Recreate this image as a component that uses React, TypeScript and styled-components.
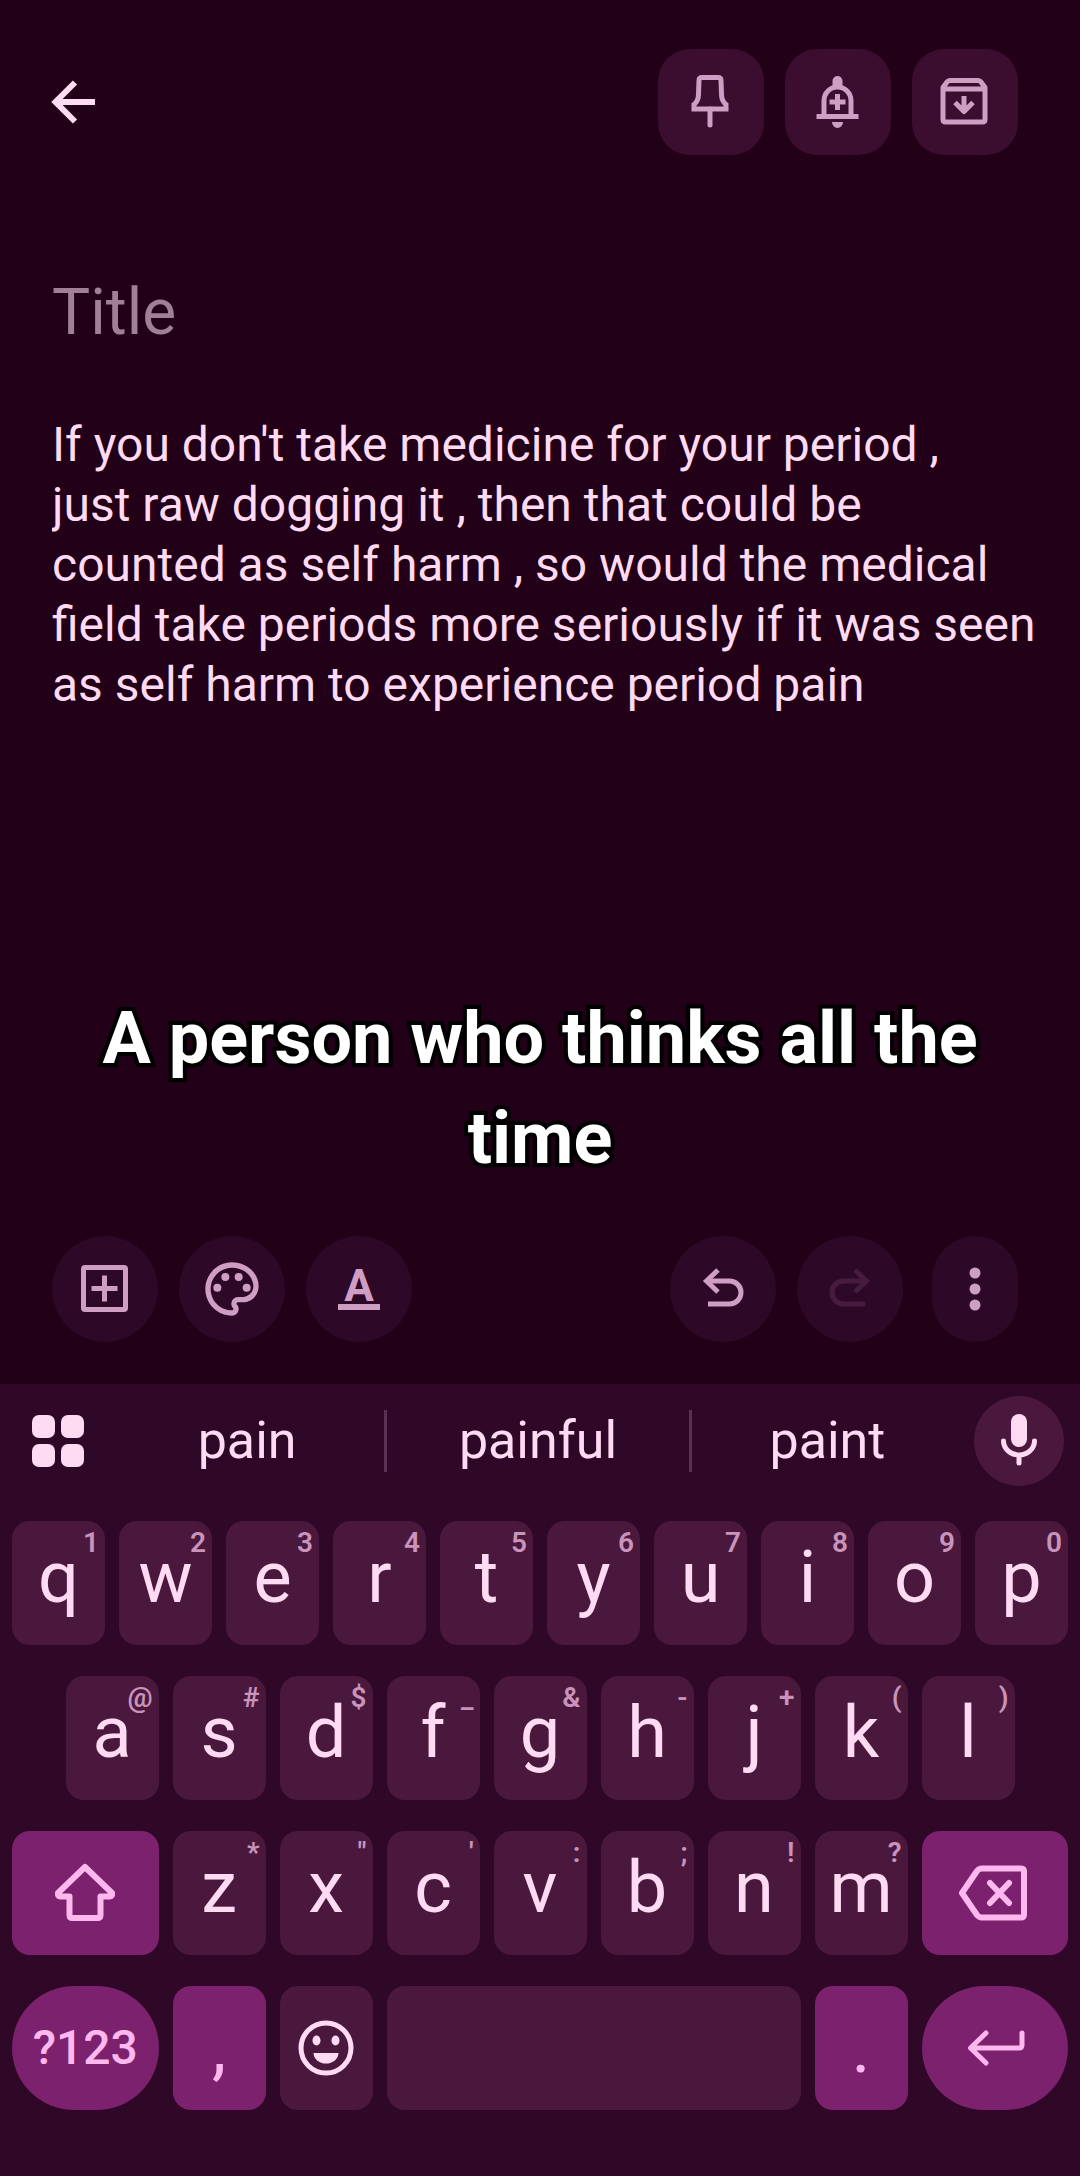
import React from "react";
import styled, { createGlobalStyle } from "styled-components";
import { MdOutlinePalette } from "react-icons/md";

const color = {
  page: "#210018",
  panel: "#2f0828",
  chip: "#3b0d2f",
  round: "#2e0827",
  key: "#4b183d",
  accent: "#7b216d",
  text: "#ffdaf3",
  accentText: "#ffb8ee",
  hint: "#c993bb",
  icon: "#cf9ec4",
  muted: "#a27e98",
  disabled: "#471a3f",
  divider: "#5c3055",
};

const GlobalStyle = createGlobalStyle`
  *, *::before, *::after { box-sizing: border-box; }
  body {
    margin: 0;
    background: ${color.page};
    color: ${color.text};
    font-family: Roboto, "Liberation Sans", sans-serif;
  }
  button, input, textarea { font: inherit; color: inherit; margin: 0; padding: 0; border: 0; background: none; }
`;

const Page = styled.div`
  display: flex;
  flex-direction: column;
  min-height: 100vh;
`;

const Header = styled.header`
  display: flex;
  align-items: center;
  justify-content: space-between;
  padding: 49px 62px 0 44px;
`;

const Group = styled.div`
  display: flex;
  gap: 21px;
`;

const PlainButton = styled.button`
  display: grid;
  place-items: center;
  height: 60px;
`;

const ChipButton = styled.button`
  display: grid;
  place-items: center;
  width: 106px;
  height: 106px;
  border-radius: 32px;
  background: ${color.chip};
  color: ${color.icon};
`;

const Note = styled.main`
  display: flex;
  flex-direction: column;
  padding: 118px 36px 0 52px;
`;

const TitleInput = styled.input`
  width: 100%;
  height: 80px;
  font-size: 64px;
  line-height: 80px;
  outline: none;
  &::placeholder { color: ${color.muted}; opacity: 1; }
`;

const BodyInput = styled.textarea`
  display: block;
  width: 100%;
  margin-top: 62px;
  font-size: 48px;
  line-height: 60px;
  resize: none;
  outline: none;
  overflow: hidden;
`;

const Caption = styled.p`
  margin: auto 0 0;
  padding: 0 60px;
  color: #fff;
  font-size: 72px;
  font-weight: 700;
  line-height: 100px;
  text-align: center;
  -webkit-text-stroke: 8px #000;
  paint-order: stroke fill;
  stroke-linejoin: round;
  text-shadow: 0 0 4px #000;
`;

const Toolbar = styled.div`
  display: flex;
  justify-content: space-between;
  padding: 47px 62px 42px 52px;
`;

const ToolButton = styled.button<{ $narrow?: boolean }>`
  display: grid;
  place-items: center;
  width: ${(p) => (p.$narrow ? 86 : 106)}px;
  height: 106px;
  margin-left: ${(p) => (p.$narrow ? 8 : 0)}px;
  border-radius: 53px;
  background: ${color.round};
  color: ${color.icon};
  &:disabled { color: ${color.disabled}; }
`;

const TextFormatMark = styled.span`
  width: 42px;
  border-bottom: 6px solid currentColor;
  font-size: 44px;
  font-weight: 700;
  line-height: 36px;
  text-align: center;
`;

const Keyboard = styled.section`
  padding-bottom: 66px;
  background: ${color.panel};
`;

const SuggestionBar = styled.div`
  display: grid;
  grid-template-columns: 110px 9fr 10fr 9fr 117px;
  align-items: center;
  height: 114px;
`;

const Suggestion = styled.button`
  height: 62px;
  font-size: 52px;
  line-height: 62px;
  & + & { border-left: 3px solid ${color.divider}; }
`;

const BarButton = styled.button`
  display: grid;
  place-items: center;
  height: 90px;
  padding-left: 6px;
`;

const MicButton = styled.button`
  display: grid;
  place-items: center;
  justify-self: center;
  width: 90px;
  height: 90px;
  margin-right: 4px;
  border-radius: 50%;
  background: ${color.key};
`;

const Keys = styled.div`
  display: grid;
  grid-template-columns: repeat(20, 1fr);
  grid-auto-rows: 124px;
  row-gap: 31px;
  padding: 23px 5px 0;
`;

const Key = styled.button<{ $span?: number; $start?: number; $accent?: boolean; $pill?: boolean; $kind?: "letter" | "symbol" | "word" }>`
  position: relative;
  display: grid;
  place-items: center;
  grid-column: ${(p) => p.$start ?? "auto"} / span ${(p) => p.$span ?? 2};
  margin: 0 7px;
  padding-bottom: ${(p) => (p.$kind === "letter" ? 10 : 0)}px;
  border-radius: ${(p) => (p.$pill ? 62 : 18)}px;
  background: ${(p) => (p.$accent ? color.accent : color.key)};
  color: ${(p) => (p.$accent ? color.accentText : color.text)};
  font-size: ${(p) => (p.$kind === "word" ? 48 : 72)}px;
  font-weight: ${(p) => (p.$kind === "word" ? 500 : 400)};
  line-height: 90px;
`;

const Hint = styled.span`
  position: absolute;
  top: 6px;
  right: 6px;
  color: ${color.hint};
  font-size: 28px;
  font-weight: 600;
  line-height: 32px;
`;

type DrawingProps = { size?: number; width?: number; round?: boolean; children: React.ReactNode };

const Drawing = ({ size = 60, width = 5, round, children }: DrawingProps) => (
  <svg
    width={size}
    height={size}
    viewBox={`0 0 ${size} ${size}`}
    fill="none"
    stroke="currentColor"
    strokeWidth={width}
    strokeLinejoin="round"
    strokeLinecap={round ? "round" : "butt"}
    aria-hidden="true"
  >
    {children}
  </svg>
);

const BackIcon = () => (
  <Drawing width={6}>
    <path d="M31 10.5 11.5 30 31 49.5M12 30H51" strokeLinejoin="miter" />
  </Drawing>
);

const PinIcon = () => (
  <Drawing>
    <path d="M21 5.500H37Q40 5.500 40 8.500L40.500 22Q40.500 29 45 32.500V37H13V32.500Q17.500 29 17.500 22L18 8.500Q18 5.500 21 5.500Z" strokeLinejoin="miter" />
    <path d="M29 37V53" strokeLinecap="round" />
  </Drawing>
);

const ReminderIcon = () => (
  <Drawing>
    <path d="M16 44V28.5a13.500 13.500 0 0 1 27 0V44M8.500 44.500H50.500M29.500 22V38M21.500 30H37.500" />
    <path d="M29.500 4a5 5 0 0 1 5 5v5H24.500V9a5 5 0 0 1 5-5ZM24 50h11a5.500 6 0 0 1-11 0Z" fill="currentColor" stroke="none" />
  </Drawing>
);

const ArchiveIcon = () => (
  <Drawing>
    <path d="M8 15.5V47.500Q8 50 10.500 50H47.500Q50 50 50 47.500V15.500L46 10Q45 8.500 43 8.500H15Q13 8.500 12 10ZM8 17H50M29 24V38M20 30.500 29 39.500 38 30.500" />
  </Drawing>
);

const AddBoxIcon = () => (
  <Drawing>
    <rect x="8.5" y="8.5" width="42" height="42" rx="1.5" />
    <path d="M29.5 16.5V42.5M16.5 29.5H42.5" />
  </Drawing>
);

const UndoIcon = () => (
  <Drawing>
    <path d="M25 11 13.5 22 25 33" strokeLinejoin="miter" />
    <path d="M13 22H36.5a11 11 0 0 1 0 23H15" />
  </Drawing>
);

const RedoIcon = () => (
  <Drawing>
    <path d="M35 11 46.5 22 35 33" strokeLinejoin="miter" />
    <path d="M47 22H23.5a11 11 0 0 0 0 23H45" />
  </Drawing>
);

const MoreIcon = () => (
  <Drawing>
    {[14, 30, 46].map((y) => (
      <circle key={y} cx="30" cy={y} r="5.5" fill="currentColor" stroke="none" />
    ))}
  </Drawing>
);

const AppsIcon = () => (
  <Drawing>
    {[4, 33].map((x) =>
      [4, 33].map((y) => <rect key={`${x}-${y}`} x={x} y={y} width="23" height="23" rx="7" fill="currentColor" stroke="none" />)
    )}
  </Drawing>
);

const MicIcon = () => (
  <Drawing round>
    <rect x="22" y="3" width="16" height="33" rx="8" fill="currentColor" stroke="none" />
    <path d="M14.5 30a15.5 14 0 0 0 31 0M30 45V52" />
  </Drawing>
);

const ShiftIcon = () => (
  <Drawing size={72} width={6}>
    <path d="M36 10 63 36Q63.5 39.5 61 39.5H51.5V58Q51.5 61 48.5 61H23.5Q20.5 61 20.5 58V39.5H11Q8.500 39.5 9 36Z" />
  </Drawing>
);

const BackspaceIcon = () => (
  <Drawing size={72} width={6} round>
    <path d="M3 36 18 14Q20 11.500 23 11.500H62Q65 11.500 65 14.500V57.500Q65 60.500 62 60.500H23Q20 60.500 18 58ZM31 26 50 46M50 26 31 46" />
  </Drawing>
);

const EnterIcon = () => (
  <Drawing size={72} round>
    <path d="M27 21 11.500 36 27 51M12 36H60Q63 36 63 33V21" />
  </Drawing>
);

const SmileIcon = () => (
  <Drawing>
    <circle cx="30" cy="30" r="25" />
    <g fill="currentColor" stroke="none">
      <ellipse cx="20.5" cy="22.5" rx="4" ry="5" />
      <ellipse cx="39.5" cy="22.5" rx="4" ry="5" />
      <path d="M17.5 35H42.5A12.5 10.5 0 0 1 17.5 35Z" />
    </g>
  </Drawing>
);

const topRow = [["q", "1"], ["w", "2"], ["e", "3"], ["r", "4"], ["t", "5"], ["y", "6"], ["u", "7"], ["i", "8"], ["o", "9"], ["p", "0"]];
const homeRow = [["a", "@"], ["s", "#"], ["d", "$"], ["f", "_"], ["g", "&"], ["h", "-"], ["j", "+"], ["k", "("], ["l", ")"]];
const bottomRow = [["z", "*"], ["x", "\""], ["c", "'"], ["v", ":"], ["b", ";"], ["n", "!"], ["m", "?"]];

const LetterKeys = ({ keys, start }: { keys: string[][]; start?: number }) => (
  <>
    {keys.map(([letter, hint], i) => (
      <Key key={letter} type="button" $kind="letter" $start={i === 0 ? start : undefined}>
        {letter}
        <Hint>{hint}</Hint>
      </Key>
    ))}
  </>
);

const noteText =
  "If you don't take medicine for your period ,\n" +
  "just raw dogging it , then that could be counted as self harm , so would the medical field take periods more seriously if it was seen as self harm to experience period pain";

export default function App() {
  return (
    <>
      <GlobalStyle />
      <Page>
        <Header>
          <PlainButton type="button" aria-label="Back"><BackIcon /></PlainButton>
          <Group>
            <ChipButton type="button" aria-label="Pin"><PinIcon /></ChipButton>
            <ChipButton type="button" aria-label="Add reminder"><ReminderIcon /></ChipButton>
            <ChipButton type="button" aria-label="Archive"><ArchiveIcon /></ChipButton>
          </Group>
        </Header>
        <Note>
          <TitleInput type="text" placeholder="Title" aria-label="Title" />
          <BodyInput rows={5} defaultValue={noteText} spellCheck={false} aria-label="Note" />
        </Note>
        <Caption>A person who thinks all the time</Caption>
        <Toolbar>
          <Group>
            <ToolButton type="button" aria-label="Add"><AddBoxIcon /></ToolButton>
            <ToolButton type="button" aria-label="Background"><MdOutlinePalette size={64} /></ToolButton>
            <ToolButton type="button" aria-label="Text formatting"><TextFormatMark>A</TextFormatMark></ToolButton>
          </Group>
          <Group>
            <ToolButton type="button" aria-label="Undo"><UndoIcon /></ToolButton>
            <ToolButton type="button" aria-label="Redo" disabled><RedoIcon /></ToolButton>
            <ToolButton type="button" aria-label="More" $narrow><MoreIcon /></ToolButton>
          </Group>
        </Toolbar>
        <Keyboard aria-label="Keyboard">
          <SuggestionBar>
            <BarButton type="button" aria-label="Keyboard menu"><AppsIcon /></BarButton>
            <Suggestion type="button">pain</Suggestion>
            <Suggestion type="button">painful</Suggestion>
            <Suggestion type="button">paint</Suggestion>
            <MicButton type="button" aria-label="Voice input"><MicIcon /></MicButton>
          </SuggestionBar>
          <Keys>
            <LetterKeys keys={topRow} />
            <LetterKeys keys={homeRow} start={2} />
            <Key type="button" aria-label="Shift" $start={1} $span={3} $accent><ShiftIcon /></Key>
            <LetterKeys keys={bottomRow} />
            <Key type="button" aria-label="Backspace" $span={3} $accent><BackspaceIcon /></Key>
            <Key type="button" $span={3} $accent $pill $kind="word">?123</Key>
            <Key type="button" $accent $kind="symbol">,</Key>
            <Key type="button" aria-label="Emoji"><SmileIcon /></Key>
            <Key type="button" aria-label="Space" $span={8} />
            <Key type="button" $accent $kind="symbol">.</Key>
            <Key type="button" aria-label="Enter" $span={3} $accent $pill><EnterIcon /></Key>
          </Keys>
        </Keyboard>
      </Page>
    </>
  );
}
